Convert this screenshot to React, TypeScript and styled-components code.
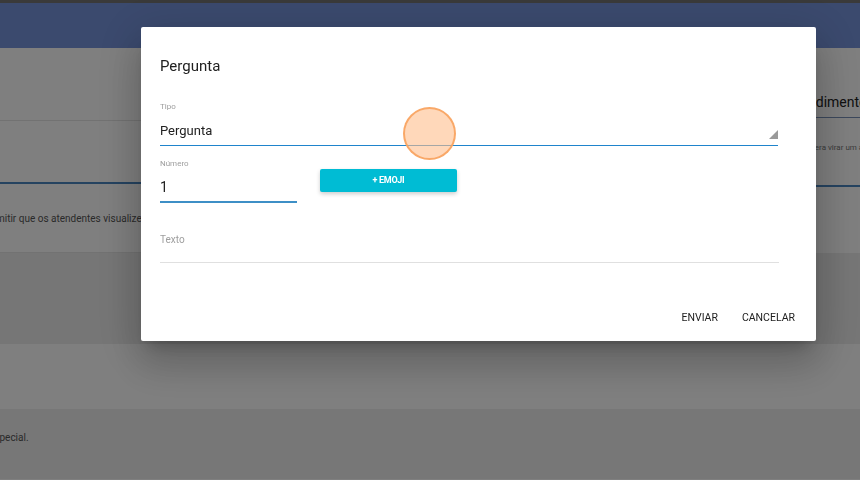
import React from 'react';
import styled, { createGlobalStyle } from 'styled-components';

const GlobalStyle = createGlobalStyle`
  html, body {
    margin: 0;
    padding: 0;
    background: #fff;
    font-family: Roboto, "Liberation Sans", sans-serif;
    overflow: hidden;
  }
  * {
    box-sizing: border-box;
  }
`;

const App = () => {
  return (
    <>
      <GlobalStyle />
      <Page>
        <TopStrip />
        <Header />
        <Body>
          <MainPane>
            <Section height={73} />
            <Section height={63} accent />
            <Section height={69}>
              <FaintText offset={-19}>
                Permitir que os atendentes visualizem as conversas da fila
              </FaintText>
            </Section>
          </MainPane>
          <SidePane>
            <SideTitle>Atendimento</SideTitle>
            <SideNote>espera virar um atendimento</SideNote>
          </SidePane>
        </Body>
        <Band tone="#ececec" height={91} />
        <Band tone="#fff" height={65} />
        <Band tone="#eeeeee" height={70}>
          <FaintText offset={-11}>especial.</FaintText>
        </Band>
      </Page>

      <Backdrop>
        <Dialog>
          <Title>Pergunta</Title>

          <Field>
            <Label>Tipo</Label>
            <SelectBox>
              <Value>Pergunta</Value>
              <Caret />
            </SelectBox>
          </Field>

          <NumberRow>
            <NumberField>
              <Label>Número</Label>
              <NumberInput>1</NumberInput>
            </NumberField>
            <EmojiButton>+ EMOJI</EmojiButton>
          </NumberRow>

          <TextField>
            <Label size={10}>Texto</Label>
            <TextArea />
          </TextField>

          <Actions>
            <FlatButton>Enviar</FlatButton>
            <FlatButton>Cancelar</FlatButton>
          </Actions>
        </Dialog>
        <TouchMark />
      </Backdrop>
    </>
  );
};

export default App;

const Page = styled.div`
  width: 860px;
  height: 480px;
  display: flex;
  flex-direction: column;
  overflow: hidden;
`;

const TopStrip = styled.div`
  height: 3px;
  background: #747474;
`;

const Header = styled.div`
  height: 45px;
  background: #7694dc;
`;

const Body = styled.div`
  display: flex;
`;

const MainPane = styled.div`
  flex: 1;
  display: flex;
  flex-direction: column;
`;

const Section = styled.div<{ height: number; accent?: boolean }>`
  height: ${p => p.height}px;
  display: flex;
  align-items: center;
  border-bottom: ${p => (p.accent ? '2px solid #4a86c0' : '1px solid #e4e4e4')};
  overflow: hidden;
`;

const FaintText = styled.span<{ offset: number }>`
  margin-left: ${p => p.offset}px;
  white-space: nowrap;
  font-size: 10px;
  color: #555;
`;

const SidePane = styled.div`
  width: 74px;
  display: flex;
  flex-direction: column;
  overflow: hidden;
  white-space: nowrap;
`;

const SideTitle = styled.div`
  height: 70px;
  padding-top: 45px;
  margin-left: 1px;
  font-size: 14px;
  line-height: 18px;
  color: #222;
  border-bottom: 1px solid #7890b8;
`;

const SideNote = styled.div`
  height: 69px;
  padding-top: 25px;
  padding-left: 16px;
  font-size: 8px;
  color: #777;
  border-bottom: 2px solid #4a86c0;
`;

const Band = styled.div<{ tone: string; height: number }>`
  height: ${p => p.height}px;
  background: ${p => p.tone};
  display: flex;
  align-items: flex-start;
  padding-top: 23px;
  overflow: hidden;
`;

const Backdrop = styled.div`
  position: fixed;
  inset: 0;
  background: rgba(0, 0, 0, 0.5);
  padding: 27px 0 0 141px;
`;

const Dialog = styled.div`
  width: 675px;
  height: 314px;
  background: #fff;
  border-radius: 2px;
  padding: 30px 38px 11px 19px;
  display: flex;
  flex-direction: column;
  box-shadow: 0 11px 15px -7px rgba(0, 0, 0, 0.2), 0 24px 38px 3px rgba(0, 0, 0, 0.14),
    0 9px 46px 8px rgba(0, 0, 0, 0.12);
`;

const Title = styled.div`
  font-size: 15px;
  line-height: 18px;
  color: #212121;
`;

const Field = styled.div`
  margin-top: 27px;
  display: flex;
  flex-direction: column;
`;

const Label = styled.div<{ size?: number }>`
  font-size: ${p => p.size ?? 8}px;
  line-height: ${p => (p.size ?? 8) + 2}px;
  color: #9e9e9e;
`;

const SelectBox = styled.div`
  margin-top: 11px;
  padding-bottom: 6px;
  display: flex;
  align-items: flex-end;
  justify-content: space-between;
  border-bottom: 1px solid #1f84cc;
`;

const Value = styled.div`
  font-size: 13px;
  line-height: 16px;
  color: #212121;
`;

const Caret = styled.div`
  width: 0;
  height: 0;
  border-left: 9px solid transparent;
  border-bottom: 9px solid #9a9a9a;
`;

const NumberRow = styled.div`
  margin-top: 13px;
  display: flex;
  align-items: flex-start;
  gap: 23px;
`;

const NumberField = styled.div`
  width: 137px;
  display: flex;
  flex-direction: column;
`;

const NumberInput = styled.div`
  margin-top: 9px;
  padding-bottom: 5px;
  font-size: 14px;
  line-height: 18px;
  color: #212121;
  border-bottom: 2px solid #3d8fc6;
`;

const EmojiButton = styled.button`
  margin-top: 10px;
  width: 137px;
  height: 23px;
  padding: 0 0 1px;
  border: none;
  border-radius: 2px;
  background: #00bcd4;
  color: #fff;
  font-family: Roboto, "Liberation Sans", sans-serif;
  font-size: 9px;
  font-weight: 700;
  letter-spacing: -0.3px;
  box-shadow: 0 2px 4px rgba(0, 0, 0, 0.2);
`;

const TextField = styled.div`
  margin-top: 31px;
  margin-right: -1px;
  display: flex;
  flex-direction: column;
`;

const TextArea = styled.div`
  height: 17px;
  border-bottom: 1px solid #e0e0e0;
`;

const Actions = styled.div`
  margin-top: auto;
  margin-right: -25px;
  display: flex;
  justify-content: flex-end;
  gap: 8px;
`;

const FlatButton = styled.button`
  border: none;
  background: transparent;
  padding: 7px 8px 5px;
  font-family: Roboto, "Liberation Sans", sans-serif;
  font-size: 10.5px;
  line-height: 14px;
  text-transform: uppercase;
  color: #212121;
`;

const TouchMark = styled.div`
  position: absolute;
  left: 403px;
  top: 107px;
  width: 53px;
  height: 53px;
  border-radius: 50%;
  background: rgba(255, 190, 140, 0.6);
  border: 2px solid rgba(248, 160, 90, 0.85);
`;
